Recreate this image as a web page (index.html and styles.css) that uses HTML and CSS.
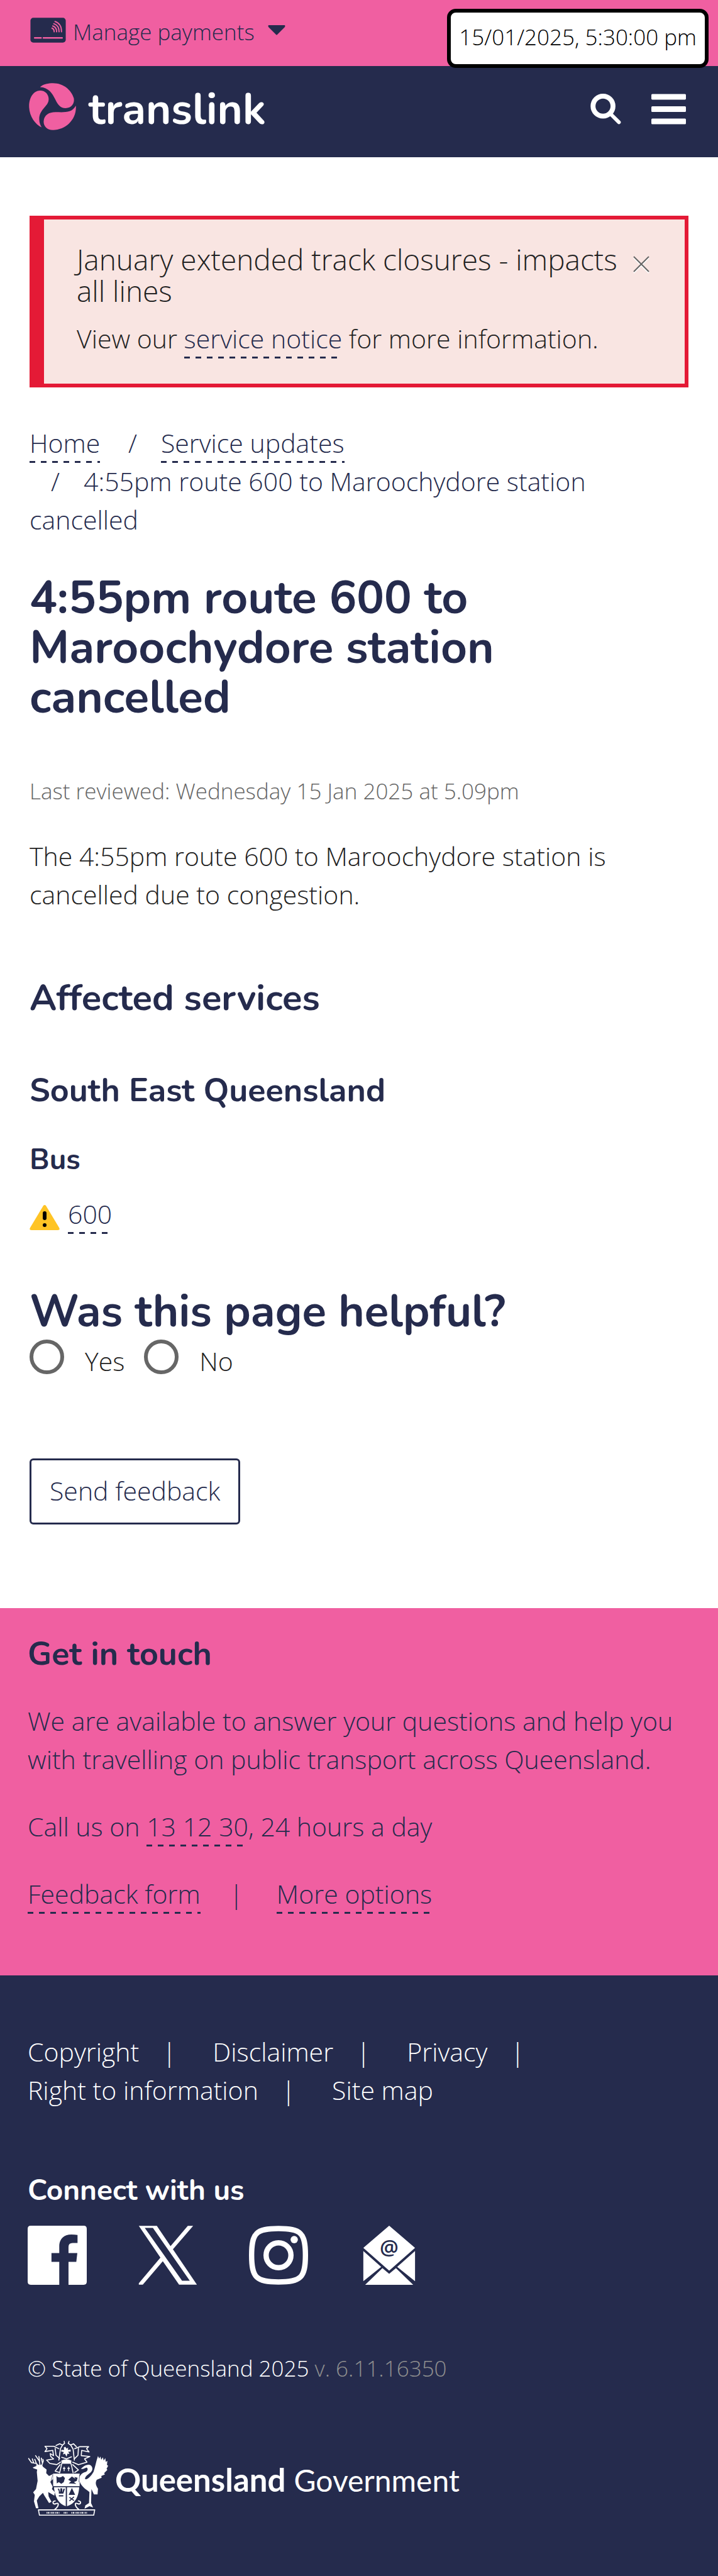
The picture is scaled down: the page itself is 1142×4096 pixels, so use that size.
FILE: index.html
```html
<!DOCTYPE html>
<html lang="en">
<head>
<meta charset="utf-8">
<meta name="viewport" content="width=device-width">
<title>4:55pm route 600 to Maroochydore station cancelled | Translink</title>
<link rel="stylesheet" href="styles.css">
</head>
<body>
<div class="topbar">
  <button class="payments" type="button">
    <svg class="payments-card" viewBox="58 56 176 124" aria-hidden="true">
      <rect x="59" y="57" width="174" height="122" rx="14" fill="#252b4d"/>
      <g fill="none" stroke="#f05fa1" stroke-width="6" stroke-linecap="round">
        <path d="M80 156H111M123 156H215" stroke-width="8"/>
        <path d="M165 108Q176 112 176 126M169 97Q188 103 188 126M174 86Q200 94 200 126M180 75Q213 86 212 126"/>
      </g>
    </svg>
    <span>Manage payments</span>
    <svg class="payments-caret" viewBox="0 0 28 16" aria-hidden="true"><path d="M1 0H27Q28 1 27 3L15 15Q14 16 13 15L1 3Q0 1 1 0Z" fill="#252b4d"/></svg>
  </button>
  <time class="clock" datetime="2025-01-15T17:30:00">15/01/2025, 5:30:00 pm</time>
</div>
<header class="header">
  <a class="brand" href="#">
    <svg class="brand-mark" viewBox="53 380 233 233" aria-hidden="true" fill="#f05fa1">
      <path d="M108 400C125 385 150 381 172 381C225 381 262 415 275 455C280 482 262 503 234 504C208 504 195 485 184 462C168 430 150 402 108 400Z"/>
      <path d="M54 500C52 455 75 417 108 417C140 417 156 445 149 472C140 500 103 515 104 560C104 575 110 590 116 599C85 585 56 545 54 500Z"/>
      <path d="M285 492C290 560 235 612 172 612C140 612 124 590 126 568C128 540 150 524 185 524C225 524 265 530 285 492Z"/>
    </svg>
    <span class="brand-name">translink</span>
  </a>
  <div class="header-actions">
    <button type="button" aria-label="Search">
      <svg class="icon-search" viewBox="750 462 151 151" aria-hidden="true"><circle cx="812" cy="523" r="49" fill="none" stroke="#fff" stroke-width="24"/><path d="M854 566L890 602" stroke="#fff" stroke-width="18" stroke-linecap="round"/></svg>
    </button>
    <button type="button" aria-label="Menu">
      <svg class="icon-menu" viewBox="0 0 171 150" aria-hidden="true" fill="#fff"><rect width="171" height="28" rx="5"/><rect y="61" width="171" height="28" rx="5"/><rect y="122" width="171" height="28" rx="5"/></svg>
    </button>
  </div>
</header>
<main class="main">
  <section class="alert">
    <div class="alert-head">
      <h2>January extended track closures - impacts all lines</h2>
      <button type="button" aria-label="Close"><svg viewBox="0 0 26 26" aria-hidden="true"><path d="M1 3L25 27M25 3L1 27" stroke="#fff" stroke-width="2"/><path d="M1 1L25 25M25 1L1 25" stroke="#666" stroke-width="2"/></svg></button>
    </div>
    <p>View our <a class="link" href="#">service notice</a> for more information.</p>
  </section>
  <nav aria-label="Breadcrumb">
    <ol class="breadcrumb">
      <li><a class="link" href="#">Home</a></li>
      <li><a class="link" href="#">Service updates</a></li>
      <li>4:55pm route 600 to Maroochydore station cancelled</li>
    </ol>
  </nav>
  <h1>4:55pm route 600 to Maroochydore station cancelled</h1>
  <p class="reviewed">Last reviewed: Wednesday 15 Jan 2025 at 5.09pm</p>
  <p class="summary">The 4:55pm route 600 to Maroochydore station is cancelled due to congestion.</p>
  <h2 class="services">Affected services</h2>
  <h3>South East Queensland</h3>
  <h4>Bus</h4>
  <p class="route">
    <svg class="icon-warning" viewBox="0 0 48 40" aria-hidden="true"><path d="M22 1Q24 -1 26 1L47 36Q49 40 45 40H3Q-1 40 1 36Z" fill="#ffc425"/><path d="M24 13V21" stroke="#000" stroke-width="6" stroke-linecap="round"/><circle cx="24" cy="32" r="3" fill="#000"/></svg>
    <span><a class="link" href="#">600</a></span>
  </p>
  <form class="feedback">
    <fieldset>
      <legend>Was this page helpful?</legend>
      <div class="choices">
        <input type="radio" name="helpful" id="yes"><label for="yes">Yes</label>
        <input type="radio" name="helpful" id="no"><label for="no">No</label>
      </div>
    </fieldset>
    <button class="send" type="button">Send feedback</button>
  </form>
</main>
<section class="contact">
  <h2>Get in touch</h2>
  <p>We are available to answer your questions and help you with travelling on public transport across Queensland.</p>
  <p>Call us on <a class="link" href="#">13 12 30</a>, 24 hours a day</p>
  <p class="contact-links"><a class="link" href="#">Feedback form</a><span>|</span><a class="link" href="#">More options</a></p>
</section>
<footer class="footer">
  <ul class="footer-links">
    <li><a href="#">Copyright</a></li>
    <li><a href="#">Disclaimer</a></li>
    <li><a href="#">Privacy</a></li>
    <li><a href="#">Right to information</a></li>
    <li><a href="#">Site map</a></li>
  </ul>
  <h2>Connect with us</h2>
  <div class="social">
    <a href="#" aria-label="Facebook"><svg class="icon-facebook" viewBox="45 45 288 288"><path fill="#fff" d="M60 45H318Q333 45 333 60V318Q333 333 318 333H244V221H282L287 178H244V148Q244 129 264 129H288V90Q275 88 258 88C220 88 199 112 199 145V178H161V221H199V333H60Q45 333 45 318V60Q45 45 60 45Z"/></svg></a>
    <a href="#" aria-label="X"><svg class="icon-x" viewBox="584 41 295 298"><path fill="#fff" fill-rule="evenodd" d="M585 42H676L745 144L832 42H859L757 160L878 338H788L706 220L605 338H585V331L694 202ZM615 52L803 318H842L656 52Z"/></svg></a>
    <a href="#" aria-label="Instagram"><svg class="icon-instagram" viewBox="1137 44 290 290"><path d="M1282 58C1392 58 1414 79 1414 189S1392 320 1282 320S1150 299 1150 189S1172 58 1282 58Z" fill="none" stroke="#fff" stroke-width="26"/><circle cx="1282" cy="189" r="61" fill="none" stroke="#fff" stroke-width="26"/><circle cx="1359" cy="112" r="18" fill="#fff"/></svg></a>
    <a href="#" aria-label="Email newsletter"><svg class="icon-mail" viewBox="0 0 86 96"><path fill="#fff" d="M43 0L85 36L43 73L1 36ZM1 41L30 67L1 90ZM85 41L56 67L85 90ZM4 96L32 69L43 78L54 69L82 96Z"/><text x="43" y="47" text-anchor="middle" class="mail-at">@</text></svg></a>
  </div>
  <p class="copyright">© State of Queensland 2025 <span>v. 6.11.16350</span></p>
  <a class="government" href="#">
    <svg class="crest" viewBox="24 50 396 370" aria-hidden="true">
      <g fill="#fff">
        <path d="M48 184L68 176L62 170L94 172L98 180L116 194L114 212L128 226L148 216V240L134 254L146 278L142 290L156 304L154 322L124 304L126 326L140 352L128 358L104 320L98 308L80 326L68 346L76 384L64 384L54 350L58 318L50 306L64 290L72 250L68 206L70 194L52 188Z"/>
        <path d="M300 208C318 206 322 188 312 184C302 188 292 194 284 190C292 184 302 172 320 170C342 170 346 194 334 206C326 216 306 224 304 240C316 248 334 226 346 206C354 184 358 156 368 128L374 140L380 130L384 146L392 134L396 150L404 138L406 156L414 152L412 172L418 176L410 190L414 196L398 212L402 218L384 226L386 234L362 244C356 256 354 266 368 288L366 316L348 316L336 290L334 358L344 380L326 374L302 386L306 370L324 358L326 304C306 290 284 276 276 246C274 230 284 214 300 208Z"/>
        <path d="M148 214H278V276H148ZM152 280H210V374C180 364 158 338 152 280ZM216 280H276C272 338 250 364 216 374Z"/>
        <path d="M188 150Q212 138 238 150L236 166H190Z"/>
        <path d="M208 82L214 92L222 86L220 98L234 96V106L222 106L228 118L218 116L214 132L206 116L196 120L200 108L188 106V98L202 98L200 86Z"/>
      </g>
      <g fill="none" stroke="#fff" stroke-width="5" stroke-linejoin="round" stroke-linecap="round">
        <path d="M78 178L66 164L42 160L28 140M52 160L46 142M66 164L58 144M84 174L80 152L62 126M92 174L100 152L98 144M82 154L78 130M96 164L90 138"/>
        <path d="M162 76L180 68L194 74L204 66L202 56M194 74L184 92L176 148M262 82L248 68L234 74L222 66L226 56M234 74L246 94L252 148"/>
        <path d="M176 92L152 80H108L118 92L108 106L146 100L150 126L134 116L136 130L150 142L116 148L132 164L166 170L184 158M158 90L162 124L180 140"/>
        <path d="M254 92L278 82H322L312 92L324 108L288 100L286 126L328 130L302 142L314 158L272 170L244 158M272 90L270 124L254 140"/>
        <path d="M190 166L180 210M236 166L246 210M182 170L158 202L178 208M244 170L272 196L254 208M190 134L214 142L238 132"/>
        <path d="M158 348C140 350 148 368 160 362C180 352 176 374 156 390M272 348C290 350 282 368 270 362C250 352 254 374 274 390" stroke-width="6"/>
        <path d="M76 392H352L347 418H81Z"/>
      </g>
      <g fill="#252b4d">
        <path d="M192 176H236L240 208H188Z"/>
        <path d="M164 226Q178 240 196 226L206 236L200 256L188 264L176 256L166 262ZM222 244L240 228L258 240L252 230L268 234L264 250L250 256L262 264L224 262L236 252Z"/>
        <path d="M240 284L256 318H224ZM176 300L170 288H178L182 306L184 286H192L194 306L198 288H206L198 312H176ZM176 320H198V326H176Z"/>
      </g>
      <g fill="none" stroke="#252b4d" stroke-width="5">
        <path d="M228 330L250 346M250 328L228 348"/>
        <path d="M148 279H278" stroke-width="3"/>
        <path d="M146 220L138 250L150 284M278 220L274 256" stroke-width="2"/>
      </g>
      <path d="M202 180V202M196 188H208M224 180V202M218 188H230" stroke="#fff" stroke-width="4"/>
      <path d="M116 406H182M200 406H220M238 406H314" stroke="#fff" stroke-width="8" stroke-dasharray="4 3 6 4 2 3"/>
    </svg>
    <span class="government-name"><b>Queensland</b><span>Government</span></span>
  </a>
</footer>
</body>
</html>
```
FILE: styles.css
```css
* {
  box-sizing: border-box;
}

body,
h1,
h2,
h3,
h4,
p,
ol,
ul,
fieldset,
legend {
  margin: 0;
  padding: 0;
}

body {
  background: #fff;
  color: #222;
  font-family: "Open Sans", "Noto Sans", sans-serif;
  font-size: 41px;
  font-weight: 300;
  line-height: 61px;
}

h1,
h2,
h3,
h4,
legend {
  color: #252b4d;
  font-family: Nunito, Lato, sans-serif;
  font-weight: 700;
}

a {
  color: inherit;
  text-decoration: none;
}

button {
  padding: 0;
  border: 0;
  background: none;
  color: #252b4d;
  font: inherit;
}

svg {
  display: block;
  flex: none;
}

ol,
ul {
  list-style: none;
}

.link {
  padding-bottom: 4px;
  background: linear-gradient(90deg, #252b4d 50%, transparent 50%) 0 100% / 18px 3px repeat-x;
  color: #252b4d;
}

/* Top bar */
.topbar {
  position: relative;
  display: flex;
  align-items: flex-start;
  height: 105px;
  padding: 25px 47px;
  background: #f05fa1;
}

.payments {
  display: flex;
  align-items: flex-start;
  font-size: 35px;
  line-height: 52px;
}

.payments-card {
  width: 57px;
  height: 40px;
  margin: 3px 11px 0 1px;
}

.payments-caret {
  width: 28px;
  height: 16px;
  margin: 15px 0 0 21px;
}

.clock {
  position: absolute;
  top: 14px;
  right: 15px;
  z-index: 1;
  padding: 13px 13px 17px;
  border: 6px solid #000;
  border-radius: 14px;
  background: #fff;
  color: #000;
  font-size: 35px;
  line-height: 52px;
}

/* Header */
.header {
  display: flex;
  justify-content: space-between;
  align-items: flex-start;
  height: 145px;
  padding: 27px 51px 0 46px;
  background: #252b4d;
}

.brand {
  display: flex;
  align-items: flex-start;
  gap: 20px;
}

.brand-mark {
  width: 75px;
  height: 75px;
}

.brand-name {
  color: #fff;
  font-family: Nunito, Lato, sans-serif;
  font-size: 69px;
  font-weight: 700;
  line-height: 85px;
}

.header-actions {
  display: flex;
  align-items: center;
  gap: 48px;
  padding-top: 17px;
}

.icon-search {
  width: 49px;
  height: 49px;
}

.icon-menu {
  width: 55px;
  height: 49px;
}

/* Main */
.main {
  padding: 93px 47px 133px;
}

.alert {
  padding: 38px 56px 41px 52px;
  border: 6px solid #e41a36;
  border-left-width: 23px;
  background: #f9e5e2;
}

.alert-head {
  display: flex;
  justify-content: space-between;
  align-items: flex-start;
}

.alert-head h2 {
  margin-bottom: 21px;
  color: #222;
  font-family: inherit;
  font-size: 46px;
  font-weight: 300;
  line-height: 50px;
}

.alert-head button {
  padding-top: 20px;
}

.alert-head svg {
  width: 26px;
  height: 26px;
  overflow: visible;
}

.breadcrumb {
  margin-top: 58px;
  color: #252b4d;
}

.breadcrumb li {
  display: inline-block;
}

.breadcrumb li + li::before {
  content: "/";
  padding: 0 38px 0 34px;
}

h1 {
  margin-top: 55px;
  font-size: 73px;
  line-height: 79px;
}

.reviewed {
  margin-top: 83px;
  color: #666;
  font-size: 35px;
  line-height: 52px;
}

.summary {
  margin-top: 47px;
}

.services {
  margin-top: 99px;
  font-size: 58px;
  line-height: 70px;
}

h3 {
  margin-top: 82px;
  font-size: 52px;
  line-height: 60px;
}

h4 {
  margin-top: 54px;
  font-size: 46px;
  line-height: 52px;
}

.route {
  display: flex;
  gap: 13px;
  margin-top: 30px;
}

.icon-warning {
  width: 48px;
  height: 40px;
  margin-top: 16px;
}

.feedback {
  margin-top: 85px;
}

.feedback fieldset {
  border: 0;
}

.feedback legend {
  font-size: 71px;
  line-height: 79px;
}

.choices {
  display: flex;
  align-items: flex-start;
  margin-top: 5px;
}

.choices input {
  width: 55px;
  height: 55px;
  margin: 0 33px 0 0;
  border: 6px solid #666;
  border-radius: 50%;
  appearance: none;
}

.choices label {
  margin: 4px 31px 0 0;
}

.send {
  margin-top: 124px;
  padding: 18px 29px 20px;
  border: 3px solid #252b4d;
  border-radius: 6px;
}

/* Contact */
.contact {
  padding: 43px 44px 99px;
  background: #f05fa1;
  color: #252b4d;
}

.contact h2 {
  font-size: 52px;
  line-height: 60px;
}

.contact p {
  margin-top: 46px;
}

.contact-links span {
  padding: 0 53px 0 46px;
}

/* Footer */
.footer {
  padding: 91px 44px 96px;
  background: #252b4d;
  color: #fff;
}

.footer-links {
  display: flex;
  flex-wrap: wrap;
  column-gap: 58px;
}

.footer-links li:not(:last-child)::after {
  content: "|";
  padding-left: 37px;
}

.footer h2 {
  margin-top: 99px;
  color: #fff;
  font-size: 46px;
  line-height: 60px;
}

.social {
  display: flex;
  margin-top: 26px;
  gap: 82px;
}

.social svg {
  width: 94px;
  height: 94px;
}

.mail-at {
  fill: #252b4d;
  font: 600 34px "Open Sans", sans-serif;
}

.copyright {
  margin-top: 107px;
  font-size: 35px;
  line-height: 52px;
}

.copyright span {
  color: #8f8f8f;
}

.government {
  display: flex;
  align-items: flex-start;
  gap: 10px;
  margin-top: 88px;
}

.crest {
  width: 129px;
  height: 120px;
}

.government-name {
  display: flex;
  align-items: baseline;
  gap: 13px;
  padding-top: 33px;
  font-family: Lato, sans-serif;
  font-size: 48px;
  font-weight: 400;
  line-height: 60px;
}

.government-name b {
  font-size: 51px;
}
```
